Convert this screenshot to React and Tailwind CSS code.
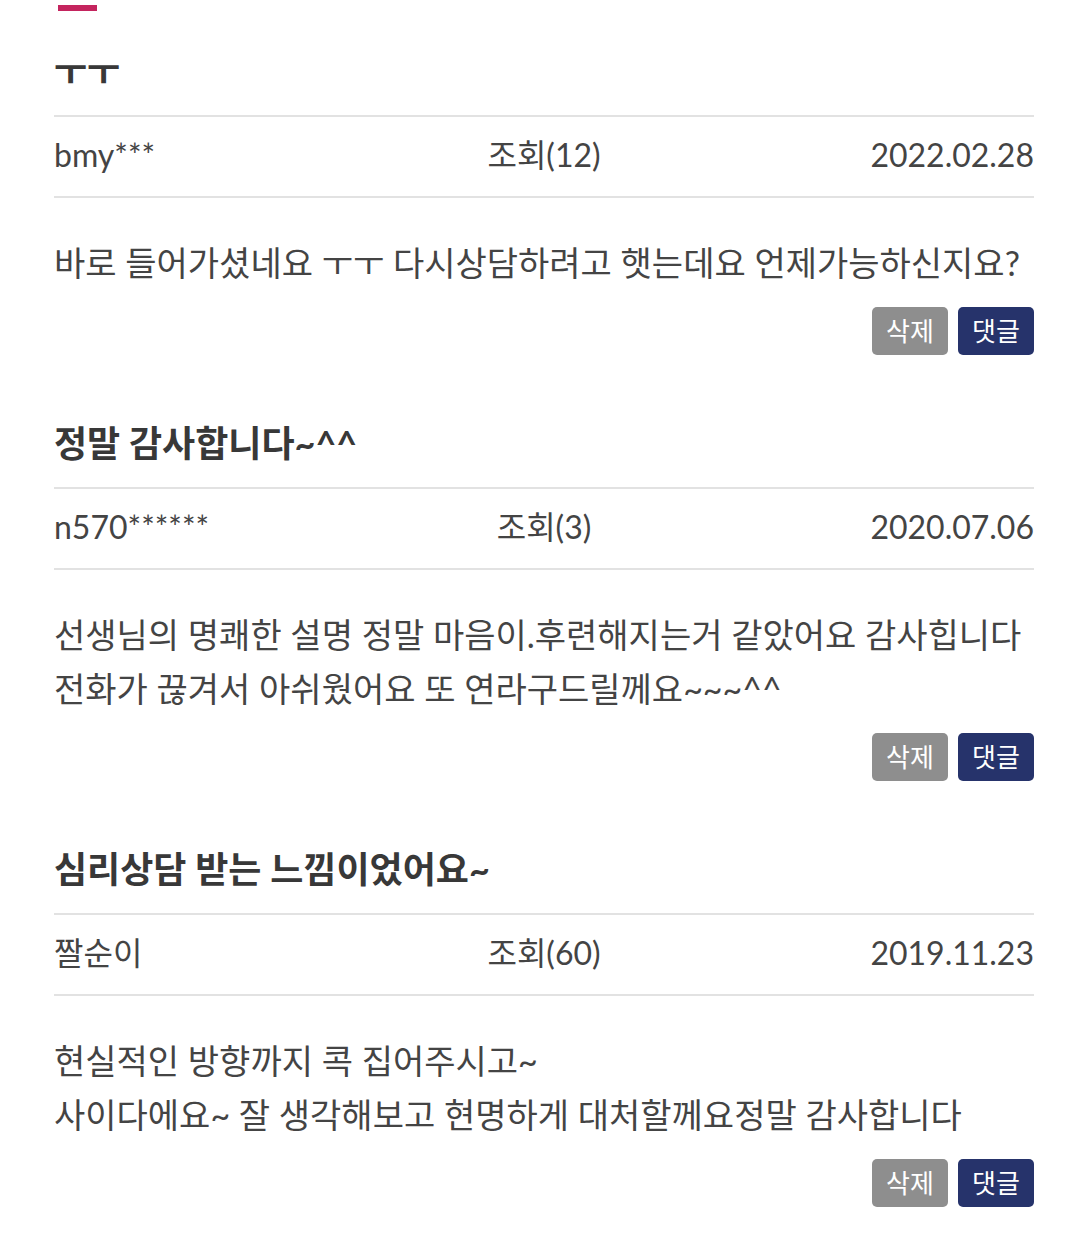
import React from 'react';

const reviews = [
  {
    title: 'ㅜㅜ',
    user: 'bmy***',
    views: 12,
    date: '2022.02.28',
    body: ['바로 들어가셨네요 ㅜㅜ 다시상담하려고 햇는데요 언제가능하신지요?'],
  },
  {
    title: '정말 감사합니다~^^',
    user: 'n570******',
    views: 3,
    date: '2020.07.06',
    body: ['선생님의 명쾌한 설명 정말 마음이.후련해지는거 같았어요 감사힙니다', '전화가 끊겨서 아쉬웠어요 또 연라구드릴께요~~~^^'],
  },
  {
    title: '심리상담 받는 느낌이었어요~',
    user: '짤순이',
    views: 60,
    date: '2019.11.23',
    body: ['현실적인 방향까지 콕 집어주시고~', '사이다에요~ 잘 생각해보고 현명하게 대처할께요정말 감사합니다'],
  },
];

const ReviewItem = ({ review, first }) => (
  <div className={first ? 'mt-[33px]' : 'mt-[61px]'}>
    <h3 className="text-[36px] font-bold leading-[54px] text-[#383838] pb-[17px]">{review.title}</h3>
    <div className="border-t-2 border-[#e2e2e2]" />
    <div className="grid grid-cols-3 items-center h-[79px] text-[32px] text-[#444] pb-[4px]">
      <span className="text-left">{review.user}</span>
      <span className="text-center">조회({review.views})</span>
      <span className="text-right">{review.date}</span>
    </div>
    <div className="border-t-2 border-[#e2e2e2]" />
    <div className="pt-[38px] text-[34px] leading-[54px] text-[#444]">
      {review.body.map((line, i) => (
        <p key={i}>{line}</p>
      ))}
    </div>
    <div className="flex justify-end gap-[10px] mt-[17px]">
      <button className="w-[76px] h-[48px] rounded-[5px] bg-[#8e8e8e] text-white text-[26px] leading-none">삭제</button>
      <button className="w-[76px] h-[48px] rounded-[5px] bg-[#26336b] text-white text-[26px] leading-none">댓글</button>
    </div>
  </div>
);

export default function App() {
  return (
    <div
      className="min-h-screen bg-white pl-[54px] pr-[46px] pt-[5px]"
      style={{ fontFamily: "Lato, 'Noto Sans CJK KR', sans-serif" }}
    >
      <div className="ml-[4px] w-[39px] h-[6px] bg-[#c4245e]" />
      {reviews.map((r, i) => (
        <ReviewItem key={i} review={r} first={i === 0} />
      ))}
    </div>
  );
}
